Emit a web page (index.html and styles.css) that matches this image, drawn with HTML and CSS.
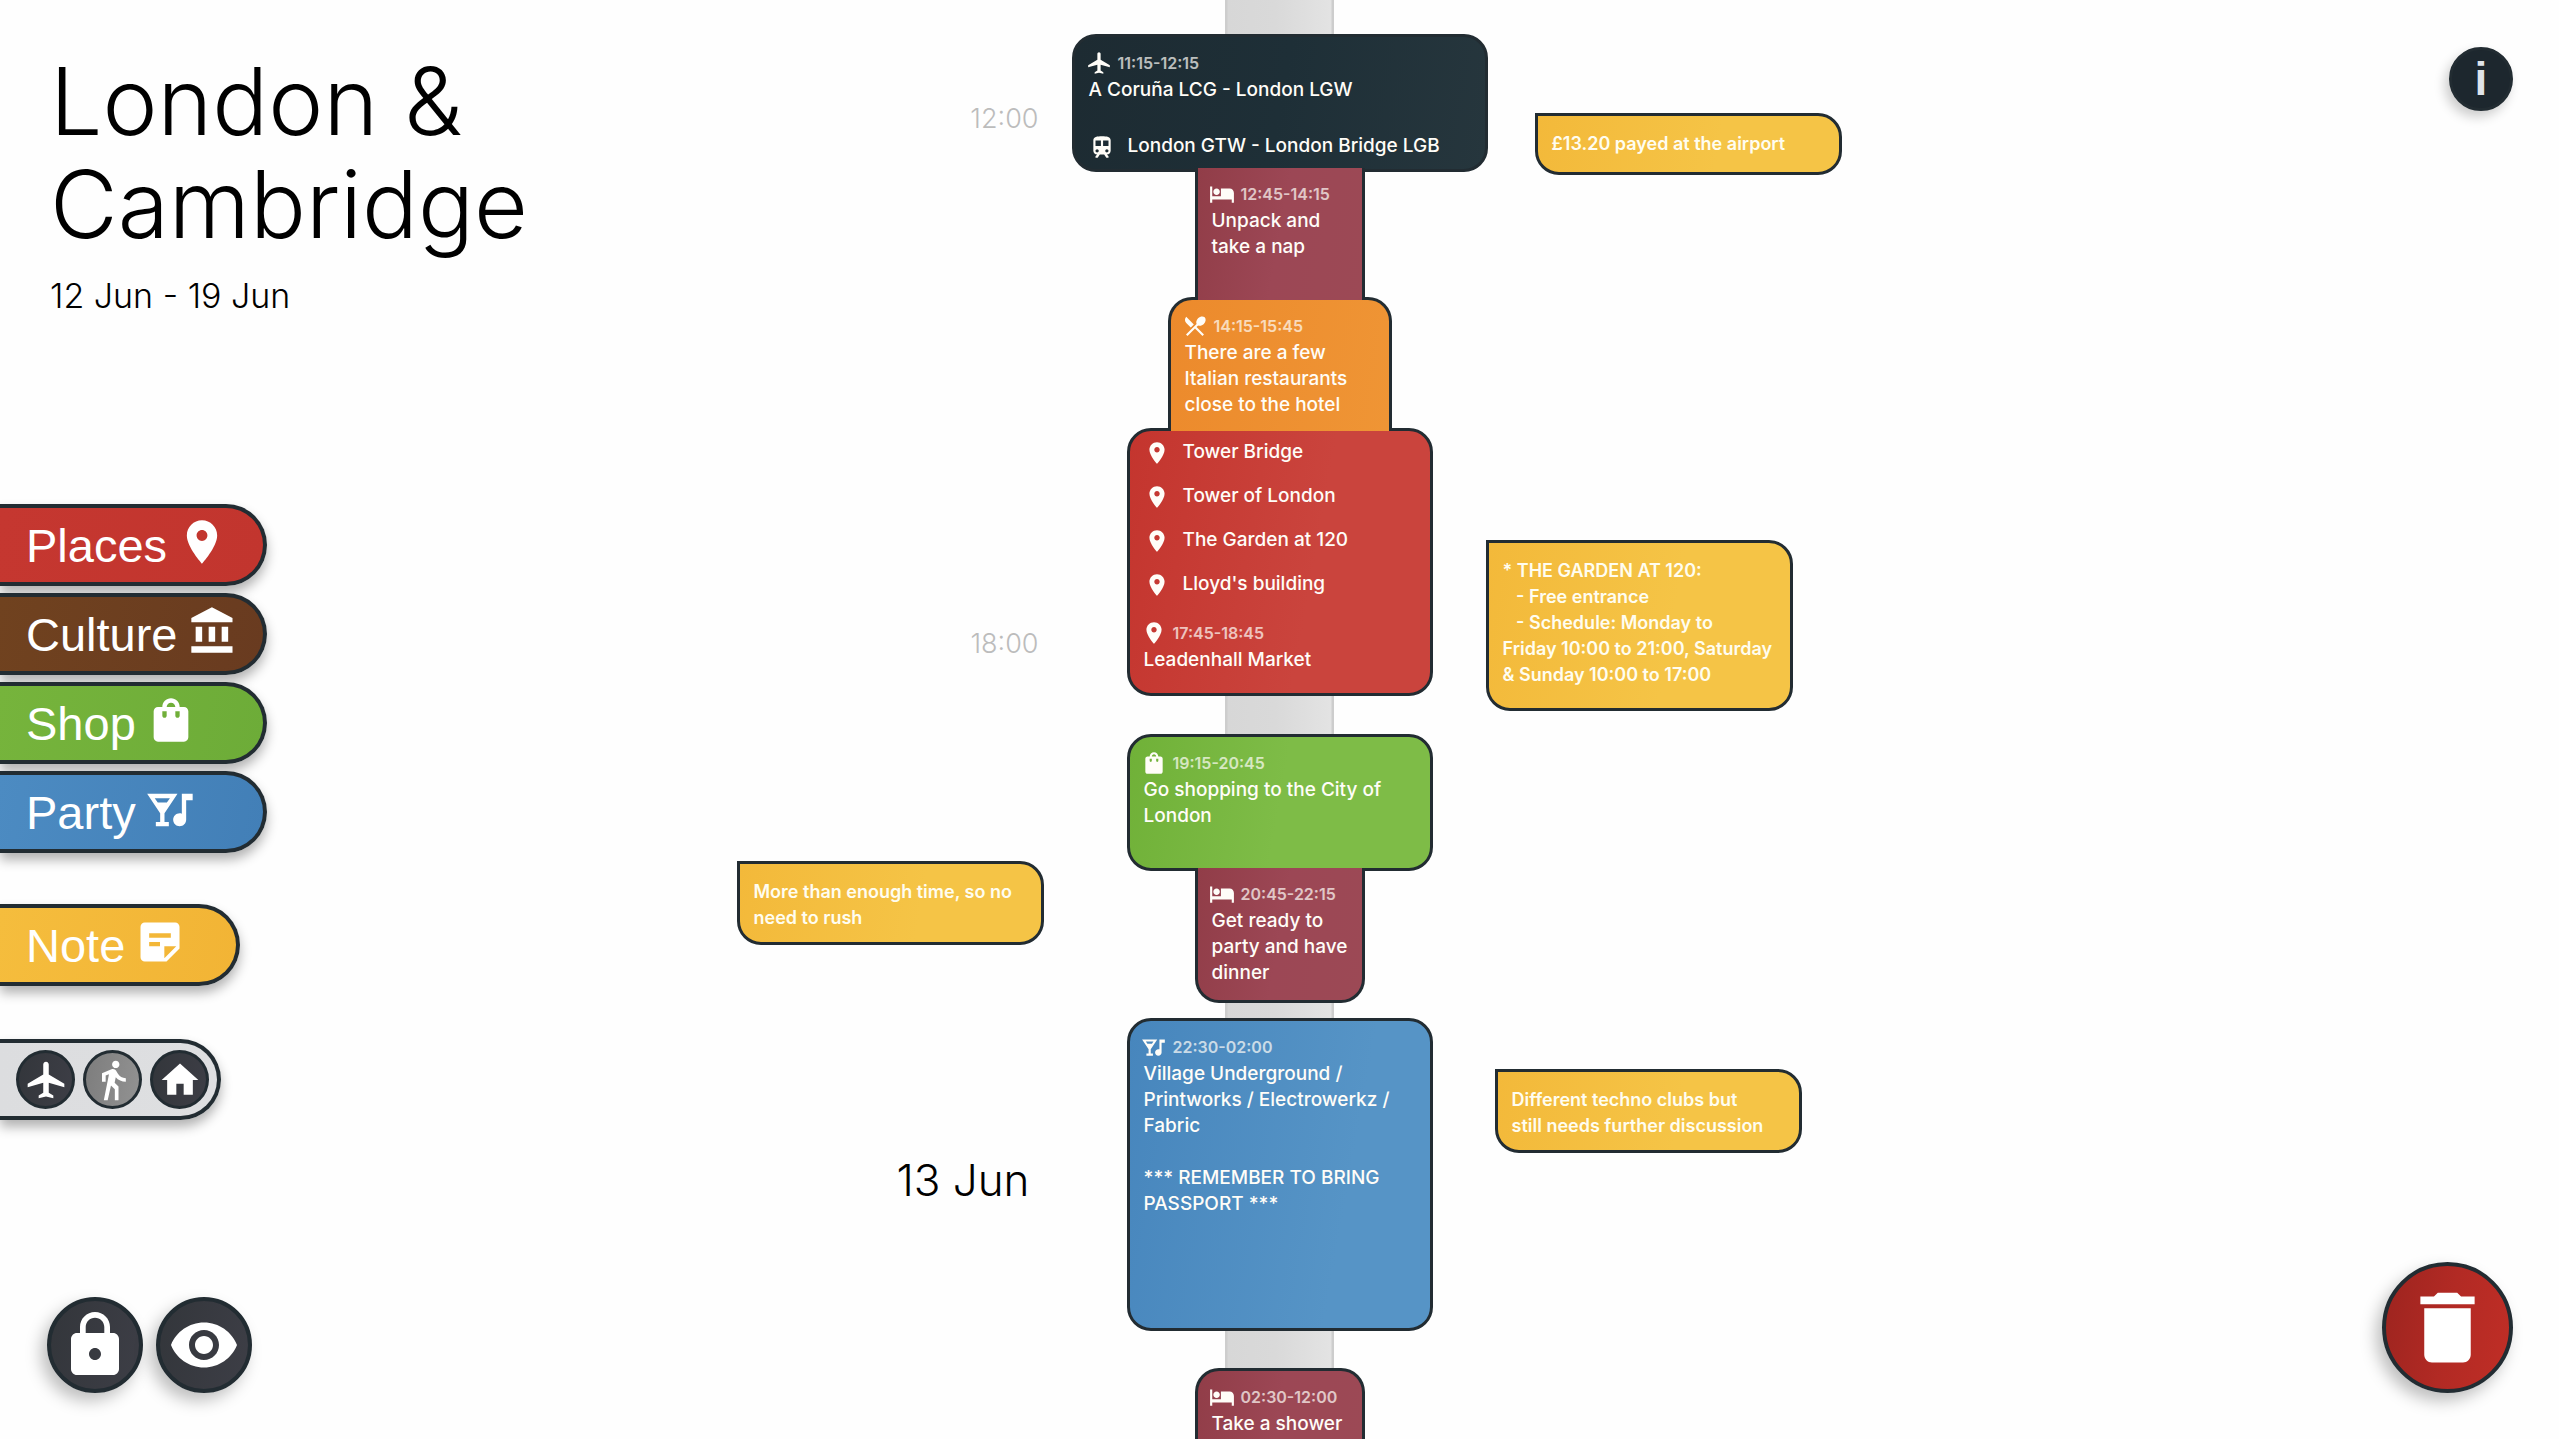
FILE: index.html
```html
<!DOCTYPE html>
<html lang="en">
<head>
  <meta charset="utf-8">
  <meta name="viewport" content="width=device-width, initial-scale=1">
  <title>London &amp; Cambridge</title>
  <link rel="stylesheet" href="styles.css">
</head>
<body>
  <svg class="sprite" aria-hidden="true">
    <symbol id="pin" viewBox="0 0 24 24"><path d="M12 2C8.13 2 5 5.13 5 9c0 5.25 7 13 7 13s7-7.75 7-13c0-3.87-3.13-7-7-7zm0 9.5c-1.38 0-2.5-1.12-2.5-2.5s1.120-2.500 2.500-2.500 2.500 1.120 2.500 2.500-1.120 2.500-2.500 2.500z"/></symbol>
    <symbol id="culture" viewBox="0 0 24 24"><path d="M4 10v7h3v-7H4zm6 0v7h3v-7h-3zM2 22h19v-3H2v3zm14-12v7h3v-7h-3zm-4.500-9L2 6v2h19V6l-9.500-5z"/></symbol>
    <symbol id="bag" viewBox="0 0 24 24"><path d="M18 6h-2c0-2.210-1.790-4-4-4S8 3.790 8 6H6c-1.100 0-2 .9-2 2v12c0 1.100.9 2 2 2h12c1.100 0 2-.9 2-2V8c0-1.100-.9-2-2-2zm-8 4c0 .55-.45 1-1 1s-1-.45-1-1V8h2v2zm2-6c1.100 0 2 .9 2 2h-4c0-1.100.9-2 2-2zm4 6c0 .55-.45 1-1 1s-1-.45-1-1V8h2v2z"/></symbol>
    <symbol id="party" viewBox="0 0 24 24"><path d="M1 5h14l-6 9v4h2v2H5v-2h2v-4L1 5zM10.100 9l1.400-2H4.490l1.400 2H10.100zM17 5h5v3h-3v9c0 1.660-1.340 3-3 3s-3-1.340-3-3 1.340-3 3-3c.35 0 .69.06 1 .17V5z"/></symbol>
    <symbol id="note" viewBox="0 0 24 24"><path d="M19 3H4.990C3.890 3 3 3.900 3 5l.01 14c0 1.100.89 2 1.990 2h10l6-6V5c0-1.100-.9-2-2-2zM7 8h10v2H7V8zm5 6H7v-2h5v2zm2 5.500V14h5.500L14 19.500z"/></symbol>
    <symbol id="plane" viewBox="0 0 24 24"><path d="M22 16v-2l-8.500-5V3.500c0-.83-.67-1.500-1.500-1.500s-1.500.67-1.500 1.500V9L2 14v2l8.500-2.500V19L8 20.500V22l4-1 4 1v-1.500L13.500 19v-5.500L22 16z"/></symbol>
    <symbol id="walk" viewBox="0 0 24 24"><path d="M13.500 5.500c1.100 0 2-.9 2-2s-.9-2-2-2-2 .9-2 2 .9 2 2 2zM9.800 8.900L7 23h2.100l1.800-8 2.100 2v6h2v-7.500l-2.100-2 .6-3C14.800 12 16.800 13 19 13v-2c-1.900 0-3.500-1-4.300-2.400l-1-1.600c-.4-.6-1-1-1.700-1-.3 0-.5.1-.8.1L6 8.300V13h2V9.600l1.800-.7"/></symbol>
    <symbol id="home" viewBox="0 0 24 24"><path d="M10 20v-6h4v6h5v-8h3L12 3 2 12h3v8z"/></symbol>
    <symbol id="lock" viewBox="0 0 24 24"><path d="M18 8h-1V6c0-2.760-2.240-5-5-5S7 3.240 7 6v2H6c-1.100 0-2 .9-2 2v10c0 1.100.9 2 2 2h12c1.100 0 2-.9 2-2V10c0-1.100-.9-2-2-2zm-6 9c-1.100 0-2-.9-2-2s.9-2 2-2 2 .9 2 2-.9 2-2 2zm3.100-9H8.900V6c0-1.710 1.390-3.100 3.100-3.100 1.710 0 3.100 1.390 3.100 3.100v2z"/></symbol>
    <symbol id="eye" viewBox="0 0 24 24"><path d="M12 4.500C7 4.500 2.730 7.610 1 12c1.730 4.390 6 7.500 11 7.500s9.270-3.110 11-7.500c-1.730-4.390-6-7.500-11-7.500zM12 17c-2.760 0-5-2.240-5-5s2.240-5 5-5 5 2.240 5 5-2.240 5-5 5zm0-8c-1.660 0-3 1.340-3 3s1.340 3 3 3 3-1.340 3-3-1.340-3-3-3z"/></symbol>
    <symbol id="trash" viewBox="0 0 24 24"><path d="M6 19c0 1.100.9 2 2 2h8c1.100 0 2-.9 2-2V7H6v12zM19 4h-3.500l-1-1h-5l-1 1H5v2h14V4z"/></symbol>
    <symbol id="bed" viewBox="0 0 24 24"><path d="M7 13c1.660 0 3-1.340 3-3S8.660 7 7 7s-3 1.340-3 3 1.340 3 3 3zm12-6h-8v7H3V5H1v15h2v-3h18v3h2v-9c0-2.210-1.790-4-4-4z"/></symbol>
    <symbol id="food" viewBox="0 0 24 24"><path d="M8.100 13.340l2.830-2.830L3.910 3.500c-1.560 1.560-1.560 4.090 0 5.660l4.190 4.180zm6.780-1.810c1.530.71 3.680.21 5.270-1.380 1.910-1.910 2.280-4.650.81-6.120-1.460-1.460-4.200-1.100-6.120.81-1.590 1.590-2.090 3.740-1.380 5.270L3.700 19.870l1.410 1.410L12 14.410l6.880 6.880 1.410-1.410L13.410 13l1.470-1.470z"/></symbol>
    <symbol id="train" viewBox="0 0 24 24"><path d="M12 2c-4.420 0-8 .5-8 4v9.500C4 17.430 5.570 19 7.500 19L6 20.500V22h2l2-3h4l2 3h2v-1.500L16.500 19c1.930 0 3.500-1.570 3.500-3.500V6c0-3.500-3.580-4-8-4zM7.500 17c-.83 0-1.500-.67-1.500-1.500S6.670 14 7.500 14s1.500.67 1.500 1.500S8.330 17 7.500 17zm3.500-6H6V6h5v5zm5.500 6c-.83 0-1.500-.67-1.500-1.500s.67-1.500 1.500-1.500 1.500.67 1.500 1.500-.67 1.500-1.500 1.500zm1.500-6h-5V6h5v5z"/></symbol>
  </svg>

  <div class="app">
    <aside class="sidebar">
      <header class="trip">
        <h1 class="trip-title">London &amp;<br>Cambridge</h1>
        <p class="trip-dates">12 Jun - 19 Jun</p>
      </header>
      <div class="palette">
        <button class="pill places" type="button">Places<svg class="pill-icon"><use href="#pin"/></svg></button>
        <button class="pill culture" type="button">Culture<svg class="pill-icon"><use href="#culture"/></svg></button>
        <button class="pill shop" type="button">Shop<svg class="pill-icon"><use href="#bag"/></svg></button>
        <button class="pill party" type="button">Party<svg class="pill-icon"><use href="#party"/></svg></button>
      </div>
      <button class="pill note-pill" type="button">Note<svg class="pill-icon"><use href="#note"/></svg></button>
      <div class="essentials">
        <button class="chip" type="button" aria-label="Flight"><svg><use href="#plane"/></svg></button>
        <button class="chip chip-muted" type="button" aria-label="Walk"><svg><use href="#walk"/></svg></button>
        <button class="chip" type="button" aria-label="Home"><svg><use href="#home"/></svg></button>
      </div>
      <div class="tools">
        <button class="round" type="button" aria-label="Lock"><svg><use href="#lock"/></svg></button>
        <button class="round" type="button" aria-label="View"><svg><use href="#eye"/></svg></button>
      </div>
    </aside>

    <section class="track track-left" aria-label="Hours and notes">
      <time class="hour hour-noon">12:00</time>
      <time class="hour hour-six">18:00</time>
      <p class="note note-rush">More than enough time, so no<br>need to rush</p>
      <h2 class="day">13 Jun</h2>
    </section>

    <main class="timeline">
      <article class="card flight">
        <div class="event">
          <h3 class="when"><svg><use href="#plane"/></svg><time>11:15-12:15</time></h3>
          <p class="text">A Coruña LCG - London LGW</p>
        </div>
        <p class="stop"><svg><use href="#train"/></svg>London GTW - London Bridge LGB</p>
      </article>
      <article class="card rest rest-nap">
        <div class="event">
          <h3 class="when"><svg><use href="#bed"/></svg><time>12:45-14:15</time></h3>
          <p class="text">Unpack and<br>take a nap</p>
        </div>
      </article>
      <article class="card food">
        <div class="event">
          <h3 class="when"><svg><use href="#food"/></svg><time>14:15-15:45</time></h3>
          <p class="text">There are a few<br>Italian restaurants<br>close to the hotel</p>
        </div>
      </article>
      <article class="card sights places">
        <p class="stop"><svg><use href="#pin"/></svg>Tower Bridge</p>
        <p class="stop"><svg><use href="#pin"/></svg>Tower of London</p>
        <p class="stop"><svg><use href="#pin"/></svg>The Garden at 120</p>
        <p class="stop"><svg><use href="#pin"/></svg>Lloyd's building</p>
        <div class="event">
          <h3 class="when"><svg><use href="#pin"/></svg><time>17:45-18:45</time></h3>
          <p class="text">Leadenhall Market</p>
        </div>
      </article>
      <article class="card shopping">
        <div class="event">
          <h3 class="when"><svg><use href="#bag"/></svg><time>19:15-20:45</time></h3>
          <p class="text">Go shopping to the City of<br>London</p>
        </div>
      </article>
      <article class="card rest rest-dinner">
        <div class="event">
          <h3 class="when"><svg><use href="#bed"/></svg><time>20:45-22:15</time></h3>
          <p class="text">Get ready to<br>party and have<br>dinner</p>
        </div>
      </article>
      <article class="card club">
        <div class="event">
          <h3 class="when"><svg><use href="#party"/></svg><time>22:30-02:00</time></h3>
          <p class="text">Village Underground /<br>Printworks / Electrowerkz /<br>Fabric<br><br>*** REMEMBER TO BRING<br>PASSPORT ***</p>
        </div>
      </article>
      <article class="card rest rest-night">
        <div class="event">
          <h3 class="when"><svg><use href="#bed"/></svg><time>02:30-12:00</time></h3>
          <p class="text">Take a shower</p>
        </div>
      </article>
    </main>

    <section class="track track-right" aria-label="Notes">
      <p class="note note-airport">£13.20 payed at the airport</p>
      <p class="note note-garden">* THE GARDEN AT 120:
   - Free entrance
   - Schedule: Monday to
Friday 10:00 to 21:00, Saturday
&amp; Sunday 10:00 to 17:00</p>
      <p class="note note-clubs">Different techno clubs but<br>still needs further discussion</p>
    </section>

    <aside class="actions">
      <button class="info" type="button" aria-label="Information">i</button>
      <button class="round trash" type="button" aria-label="Delete"><svg><use href="#trash"/></svg></button>
    </aside>
  </div>
</body>
</html>
```

FILE: styles.css
```css
:root {
  --ink: #222c32;
  --line: 26px;
}

* {
  box-sizing: border-box;
}

body,
h1,
h2,
h3,
p {
  margin: 0;
  font-weight: inherit;
}

body {
  background: #fefefe;
  color: #000;
  font-family: Inter, "Open Sans", sans-serif;
  overflow: hidden;
}

button {
  padding: 0;
  color: #fff;
  cursor: pointer;
}

svg {
  display: block;
  flex: none;
  fill: currentColor;
}

.sprite {
  display: none;
}

.app {
  display: grid;
  grid-template-columns: minmax(0, 1fr) 376px 412px 376px minmax(0, 1fr);
  height: 100vh;
}

/* Sidebar */

.sidebar {
  display: flex;
  flex-direction: column;
  align-items: flex-start;
  padding-bottom: 46px;
}

.trip {
  padding: 50px 0 0 50px;
  font-weight: 300;
  white-space: nowrap;
}

.trip-title {
  font-size: 93px;
  line-height: 103px;
}

.trip-dates {
  margin-top: 20px;
  font-size: 34px;
  line-height: 40px;
}

.palette {
  display: flex;
  flex-direction: column;
  gap: 7px;
  margin-top: 188px;
}

.pill {
  display: flex;
  align-items: center;
  gap: 9px;
  width: 267px;
  height: 82px;
  padding-left: 26px;
  border: 4px solid var(--ink);
  border-left: 0;
  border-radius: 0 41px 41px 0;
  box-shadow: 0 7px 12px rgba(0, 0, 0, 0.3);
  font: 47px "Liberation Sans", sans-serif;
}

.pill-icon {
  width: 52px;
  height: 52px;
  margin-bottom: 6px;
}

.places {
  background: linear-gradient(100deg, #c53730, #c2352e);
}

.culture {
  background: linear-gradient(100deg, #70421f, #693b20);
}

.shop {
  background: linear-gradient(100deg, #76b43c, #6dac38);
}

.party {
  background: linear-gradient(100deg, #4c8bc2, #427fb7);
}

.note-pill {
  width: 240px;
  margin-top: 51px;
  background: linear-gradient(100deg, #f5bd3d, #f2b435);
}

.essentials {
  display: flex;
  align-items: center;
  justify-content: flex-end;
  gap: 8px;
  width: 221px;
  height: 81px;
  margin-top: 53px;
  padding-right: 8px;
  border: 4px solid var(--ink);
  border-left: 0;
  border-radius: 0 41px 41px 0;
  background: linear-gradient(90deg, #dcdddf, #dedfe1);
  box-shadow: 0 7px 12px rgba(0, 0, 0, 0.3);
}

.chip,
.round,
.info {
  display: flex;
  align-items: center;
  justify-content: center;
  border: 3px solid var(--ink);
  border-radius: 50%;
  background: linear-gradient(100deg, #33363b, #3d3e46);
}

.chip {
  width: 59px;
  height: 59px;
}

.chip svg {
  width: 44px;
  height: 44px;
}

.chip-muted {
  background: linear-gradient(100deg, #7d7d7d, #929292);
}

.tools {
  display: flex;
  gap: 13px;
  margin-top: auto;
  padding-left: 47px;
}

.round {
  width: 96px;
  height: 96px;
  border-width: 4px;
  box-shadow: -6px 8px 16px rgba(0, 0, 0, 0.25);
}

.round svg {
  width: 72px;
  height: 72px;
}

/* Hour labels and notes */

.track {
  display: flex;
  flex-direction: column;
}

.track-left {
  align-items: flex-end;
  padding-right: 30px;
}

.hour {
  padding-right: 5px;
  color: #bcbcbc;
  font-size: 27px;
  font-weight: 300;
  line-height: 40px;
}

.hour-noon {
  margin-top: 99px;
}

.hour-six {
  margin-top: 485px;
}

.note-rush {
  margin-top: 197px;
}

.day {
  margin-top: 205px;
  padding-right: 14px;
  font-size: 44px;
  font-weight: 300;
  line-height: 60px;
}

.note {
  width: 307px;
  min-height: 62px;
  padding: 15px 11px 11px 14px;
  border: 3px solid var(--ink);
  border-radius: 0 24px 24px 24px;
  background: linear-gradient(100deg, #f3b93a, #f5c446 60%);
  color: #fffdf0;
  font-size: 18px;
  font-weight: 600;
  line-height: var(--line);
  white-space: pre;
}

.track-right {
  align-items: flex-start;
}

.note-airport {
  margin: 113px 0 0 49px;
}

.note-garden {
  min-height: 171px;
  margin-top: 365px;
}

.note-clubs {
  margin: 358px 0 0 9px;
}

/* Timeline */

.timeline {
  display: flex;
  flex-direction: column;
  align-items: center;
  min-height: 0;
  padding-top: 34px;
  background: linear-gradient(90deg, #cdcdcd 2px, #d7d7d7 3px, #d9d9d9 50px, #e3e3e3 106px, #cdcdcd 107px) center top / 109px 100% no-repeat;
}

.card {
  position: relative;
  flex: none;
  width: 306px;
  border: 3px solid var(--ink);
  border-radius: 24px;
  color: #fffdf8;
  font-size: 19px;
  font-weight: 500;
  line-height: var(--line);
  white-space: nowrap;
}

.event {
  padding: 12px 0 12px 14px;
}

.when {
  display: flex;
  align-items: center;
  gap: 6px;
  height: 28px;
  margin-left: -3px;
  font-size: 16px;
  font-weight: 600;
}

.when time {
  opacity: 0.7;
}

.when svg,
.stop svg {
  width: 26px;
  height: 26px;
}

.stop {
  display: flex;
  align-items: center;
  gap: 13px;
  height: 44px;
  padding: 0 0 3px 14px;
}

.stop svg {
  margin-top: 3px;
}

.flight {
  display: flex;
  flex-direction: column;
  justify-content: space-between;
  width: 416px;
  height: 138px;
  background: linear-gradient(100deg, #1d2b32, #1e2f37 50%, #26363d);
}

.flight .event {
  padding-bottom: 0;
}

.rest {
  z-index: 1;
  width: 170px;
  background: linear-gradient(100deg, #913d48, #9c4755 50%, #9c4955);
}

.rest-nap {
  z-index: 2;
  height: 132px;
  margin: -4px 0 -3px;
  border-width: 0 3px;
  border-radius: 0;
}

.food {
  z-index: 1;
  width: 224px;
  height: 134px;
  border-bottom: 0;
  border-radius: 24px 24px 0 0;
  background: linear-gradient(100deg, #ec8a2c, #ef9535);
}

.sights {
  height: 268px;
  margin-top: -3px;
  background: linear-gradient(100deg, #c4352e, #ca443d 60%);
}

.shopping {
  height: 137px;
  margin-top: 38px;
  background: linear-gradient(100deg, #70b138, #7ebc47 50%);
}

.rest-dinner {
  height: 135px;
  margin-top: -3px;
  border-top: 0;
  border-radius: 0 0 24px 24px;
}

.club {
  height: 313px;
  margin-top: 15px;
  background: linear-gradient(100deg, #4786bd, #5694c6 70%);
}

.rest-night {
  flex: 1 0 auto;
  margin-top: 37px;
  border-bottom: 0;
  border-radius: 24px 24px 0 0;
}

.rest-night .event {
  padding-bottom: 0;
}

/* Corner actions */

.actions {
  display: flex;
  flex-direction: column;
  align-items: flex-end;
  justify-content: space-between;
  padding: 47px 46px 46px 0;
}

.info {
  width: 64px;
  height: 64px;
  background: #1d272e;
  box-shadow: -4px 6px 12px rgba(0, 0, 0, 0.2);
  color: #e0e4ea;
  font: bold 46px/1 "Liberation Sans", sans-serif;
}

.trash {
  width: 131px;
  height: 131px;
  background: linear-gradient(100deg, #9d241f, #b22a24 50%, #c02e26);
}

.trash svg {
  width: 93px;
  height: 93px;
}
```
